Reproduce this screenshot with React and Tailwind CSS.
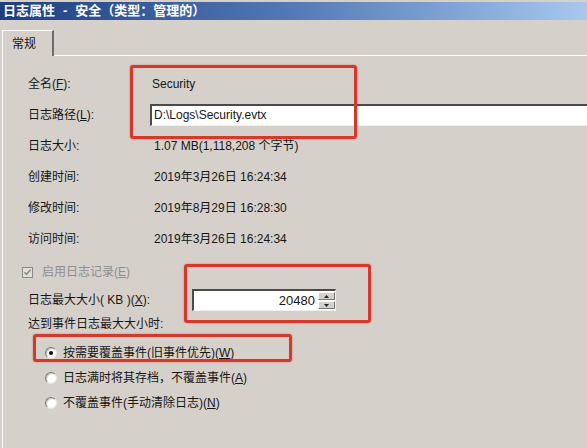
import React from 'react'

const font = "font-['Liberation_Sans','Noto_Sans_CJK_SC',sans-serif]"

function U({ children }) {
  return <span className="underline underline-offset-[1px]">{children}</span>
}

function Row({ label, children }) {
  return (
    <div className="flex h-[31px] items-center">
      <div className="w-[123px] shrink-0">{label}</div>
      {children}
    </div>
  )
}

function Radio({ checked, children }) {
  return (
    <div className="flex h-[25px] items-center pl-[17px]">
      <div className="flex h-[12px] w-[12px] items-center justify-center rounded-full border border-t-[#7a7a7a] border-l-[#7a7a7a] border-b-[#e6e6e6] border-r-[#e6e6e6] bg-white shadow-[inset_1px_1px_1px_rgba(0,0,0,0.25)]">
        {checked && <div className="h-[4px] w-[4px] rounded-full bg-[#111]" />}
      </div>
      <span className="ml-[6px]">{children}</span>
    </div>
  )
}

function Callout({ className }) {
  return (
    <div
      className={`pointer-events-none absolute rounded-[3px] border-[3px] border-[#d8372b] shadow-[0_0_2px_rgba(216,55,43,0.6)] ${className}`}
    />
  )
}

export default function App() {
  return (
    <div className={`relative h-[448px] w-[587px] overflow-hidden bg-[#d5d1ca] pt-[2px] text-[12px] text-[#161616] ${font}`}>
      {/* title bar */}
      <div className="flex h-[18px] items-center bg-gradient-to-r from-[#1e3f80] via-[#5579b6] to-[#a8c8ee] pl-[3px] text-[13px] font-bold text-white">
        <span>日志属性</span>
        <span className="mx-[8px]">-</span>
        <span>安全（类型：管理的）</span>
      </div>

      {/* tab strip */}
      <div className="flex pl-[2px] pt-[10px]">
        <div className="relative z-10 -mb-px flex h-[26px] w-[52px] items-start border-l border-t border-r-2 border-l-white border-t-white border-r-[#6e6c68] bg-[#d5d1ca] pl-[9px] pt-[4px] text-[12px]">
          常规
        </div>
      </div>

      {/* panel */}
      <div className="ml-[2px] h-[400px] border-l border-t border-white pl-[25px] pt-[12px]">
        <Row label={<>全名(<U>F</U>):</>}>
          <span className="ml-[1px]">Security</span>
        </Row>
        <Row label={<>日志路径(<U>L</U>):</>}>
          <div className="-ml-[1px] flex h-[22px] w-[460px] shrink-0 items-center border-l-2 border-t-2 border-b border-l-[#4a4a4a] border-t-[#4a4a4a] border-b-[#f0f0f0] bg-white pl-[2px]">
            D:\Logs\Security.evtx
          </div>
        </Row>
        <Row label="日志大小:">
          <span className="ml-[3px]">1.07 MB(1,118,208 个字节)</span>
        </Row>
        <Row label="创建时间:">
          <span className="ml-[3px]">2019年3月26日 16:24:34</span>
        </Row>
        <Row label="修改时间:">
          <span className="ml-[3px]">2019年8月29日 16:28:30</span>
        </Row>
        <Row label="访问时间:">
          <span className="ml-[3px]">2019年3月26日 16:24:34</span>
        </Row>

        {/* enable logging (disabled) */}
        <div className="-ml-[6px] mt-[8px] flex h-[20px] items-center text-[#8e8e8e]">
          <div className="flex h-[11px] w-[11px] items-center justify-center border border-[#8a8a8a] bg-[#e2e0dc]">
            <svg width="9" height="9" viewBox="0 0 9 9">
              <path d="M1.5 4.2 L3.5 6.3 L7.6 1.8" fill="none" stroke="#8a8a8a" strokeWidth="1.6" />
            </svg>
          </div>
          <span className="ml-[9px]">启用日志记录(<U>E</U>)</span>
        </div>

        {/* max size */}
        <div className="mt-[7px] flex h-[22px] items-center">
          <div className="w-[164px] shrink-0">日志最大大小( KB )(<U>X</U>):</div>
          <div className="flex h-[22px] w-[144px] items-center border-l-2 border-t-2 border-b border-r border-l-[#4a4a4a] border-t-[#4a4a4a] border-b-[#f0f0f0] border-r-[#f0f0f0] bg-white">
            <div className="flex-1 pr-[3px] text-right text-[13px]">20480</div>
            <div className="flex h-[17px] w-[17px] flex-col">
              <div className="flex h-[8px] items-center justify-center border border-l-white border-t-white border-b-[#777] border-r-[#777] bg-[#d5d1ca]">
                <svg width="5" height="3" viewBox="0 0 5 3">
                  <path d="M0 3 L2.5 0 L5 3 Z" fill="#222" />
                </svg>
              </div>
              <div className="mt-[1px] flex h-[8px] items-center justify-center border border-l-white border-t-white border-b-[#777] border-r-[#777] bg-[#d5d1ca]">
                <svg width="5" height="3" viewBox="0 0 5 3">
                  <path d="M0 0 L5 0 L2.5 3 Z" fill="#222" />
                </svg>
              </div>
            </div>
          </div>
        </div>

        <div className="mt-[5px] flex h-[16px] items-center">达到事件日志最大大小时:</div>

        <div className="mt-[8px]">
          <Radio checked>按需要覆盖事件(旧事件优先)(<U>W</U>)</Radio>
          <Radio>日志满时将其存档，不覆盖事件(<U>A</U>)</Radio>
          <Radio>不覆盖事件(手动清除日志)(<U>N</U>)</Radio>
        </div>
      </div>

      {/* red annotation boxes */}
      <Callout className="left-[130px] top-[65px] h-[74px] w-[227px]" />
      <Callout className="left-[184px] top-[264px] h-[59px] w-[187px]" />
      <Callout className="left-[33px] top-[334px] h-[28px] w-[259px]" />
    </div>
  )
}
